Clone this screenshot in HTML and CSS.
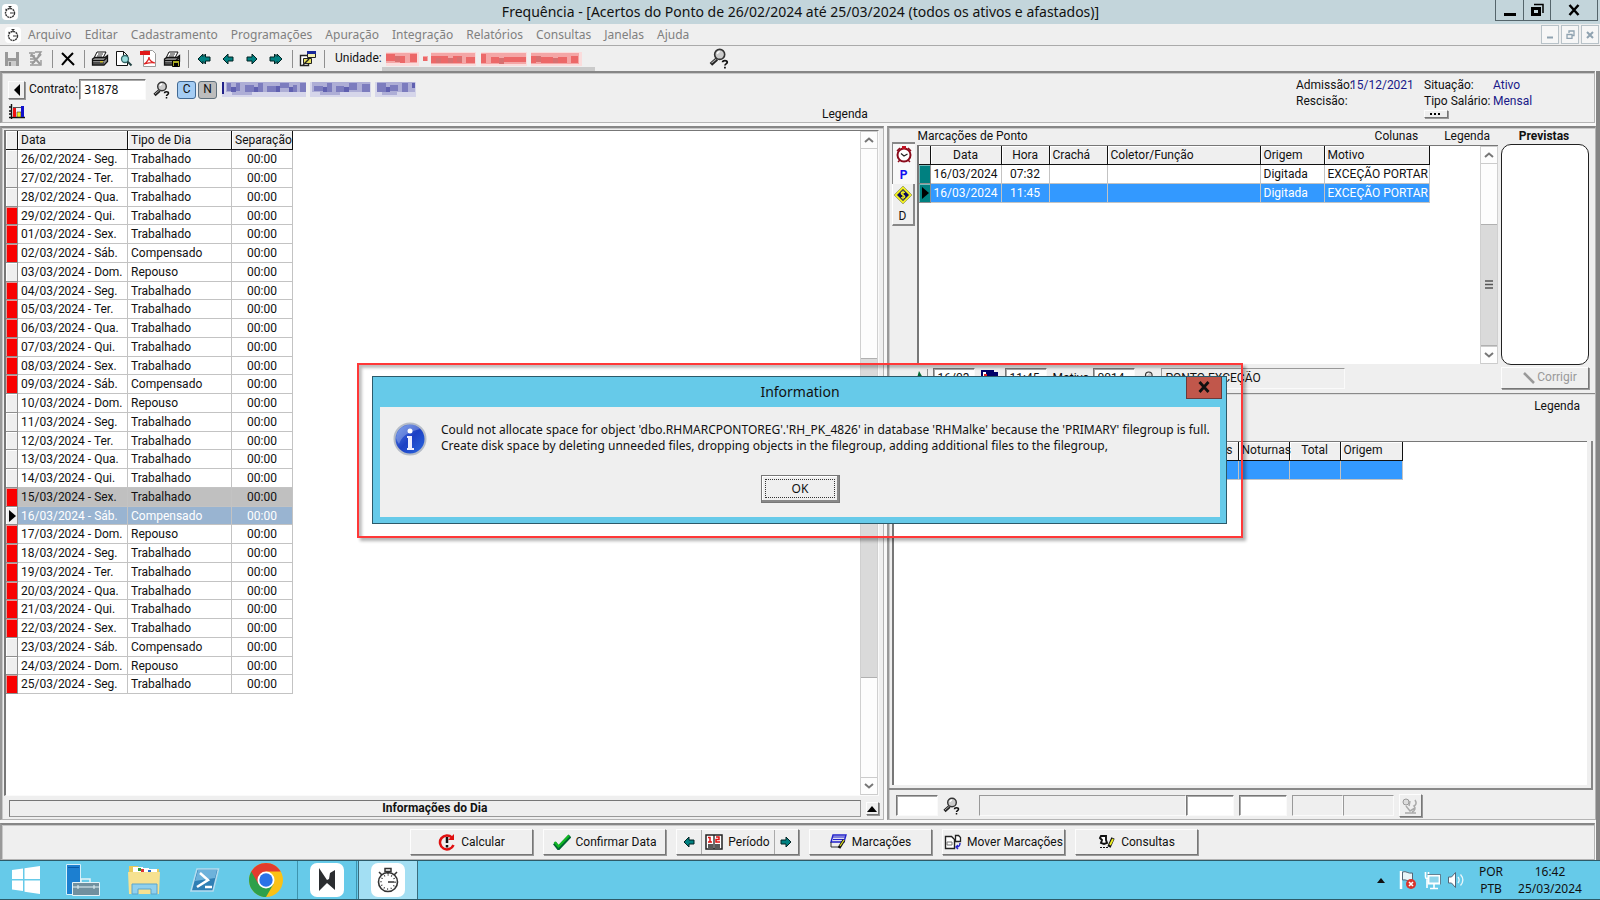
FILE: index.html
```html
<!DOCTYPE html>
<html lang="pt-BR">
<head>
<meta charset="utf-8">
<title>Frequência - Acertos do Ponto</title>
<link rel="stylesheet" href="styles.css">
</head>
<body>
<svg class="defs" aria-hidden="true">
  <symbol id="i-mag" viewBox="0 0 18 18"><path d="M7.5 9.5 2.5 14" stroke="#222" stroke-width="3.2"/><path d="M7 9.5 3 13" stroke="#aaa" stroke-width="1"/><circle cx="10" cy="5.500" r="4.300" fill="#ccc" stroke="#333" stroke-width="1.400"/><path d="M8 5a2.500 2.500 0 0 1 2-2" stroke="#fff" fill="none" stroke-width="1.300"/><path d="M12.500 12.300c0-2 4-2 4 0 0 1.300-2 1.300-2 2.700M14.500 16v1.600" stroke="#111" stroke-width="1.500" fill="none"/></symbol>
  <symbol id="i-left" viewBox="0 0 12 12"><path d="M1 6 6 1v3h5v4H6v3z" fill="#008080" stroke="#022" stroke-width="1"/></symbol>
  <symbol id="i-right" viewBox="0 0 12 12"><path d="M11 6 6 1v3H1v4h5v3z" fill="#008080" stroke="#022" stroke-width="1"/></symbol>
  <symbol id="i-left2" viewBox="0 0 14 12"><path d="M1 6 6 1v2.500L8.500 1v3H13v4H8.500v3L6 8.500V11z" fill="#008080" stroke="#022" stroke-width="1"/></symbol>
  <symbol id="i-right2" viewBox="0 0 14 12"><path d="M13 6 8 1v2.500L5.500 1v3H1v4h4.500v3L8 8.500V11z" fill="#008080" stroke="#022" stroke-width="1"/></symbol>
  <symbol id="i-print" viewBox="0 0 18 16"><path d="M6 1h9l-3 6H3z" fill="#fff" stroke="#111"/><path d="M7 3h5M6 5h5" stroke="#333"/><path d="M1.500 8 4 6.500h10l2.500-2v6L13 14H1.500z" fill="#8a8a8a" stroke="#111" stroke-width="1.300"/><path d="M2 9.500h11l3-3M2 12h11" stroke="#111" stroke-width="1.200" fill="none"/><path d="M9 10.800h3" stroke="#e0d020" stroke-width="1.200"/></symbol>
  <symbol id="i-watch" viewBox="0 0 16 16"><rect width="16" height="16" rx="4" fill="#fff"/><circle cx="8" cy="9" r="4.500" fill="none" stroke="#333" stroke-width="1.400" stroke-dasharray="2 .6"/><path d="M8 9h3.500M6.500 2.500h3M8 2.500V5M3.500 5 5 6" stroke="#333" stroke-width="1.200"/></symbol>
  <symbol id="i-up" viewBox="0 0 10 6"><path d="M1 5 5 1.500 9 5" fill="none" stroke="#777" stroke-width="2"/></symbol>
  <symbol id="i-down" viewBox="0 0 10 6"><path d="M1 1 5 4.500 9 1" fill="none" stroke="#777" stroke-width="2"/></symbol>
</svg>

<header class="titlebar">
  <svg class="s16"><use href="#i-watch"/></svg>
  <h1>Frequência - [Acertos do Ponto de 26/02/2024 até 25/03/2024 (todos os ativos e afastados)]</h1>
  <div class="winbtns">
    <button aria-label="Minimizar"><svg width="14" height="14"><path d="M1 11.500h12" stroke="#000" stroke-width="3"/></svg></button>
    <button aria-label="Restaurar"><svg width="14" height="14"><path d="M2.500 5.500h7v6h-7z" fill="none" stroke="#000" stroke-width="3"/><path d="M4 1.500h9V10" fill="none" stroke="#000" stroke-width="1.500"/></svg></button>
    <button class="wide" aria-label="Fechar"><svg width="12" height="12"><path d="m1.500 1 9 10m0-10-9 10" stroke="#000" stroke-width="2.500"/></svg></button>
  </div>
</header>

<nav class="menubar">
  <svg class="s16"><use href="#i-watch"/></svg>
  <a href="#">Arquivo</a><a href="#">Editar</a><a href="#">Cadastramento</a><a href="#">Programações</a><a href="#">Apuração</a><a href="#">Integração</a><a href="#">Relatórios</a><a href="#">Consultas</a><a href="#">Janelas</a><a href="#">Ajuda</a>
  <div class="mdibtns">
    <button aria-label="Minimizar janela"><svg width="8" height="8"><path d="M1 6.500h6" stroke="#8fa2b0" stroke-width="2"/></svg></button>
    <button aria-label="Restaurar janela"><svg width="9" height="9"><path d="M1 4.500h5v4H1zM3 3V1h5v4.500H6" fill="none" stroke="#8fa2b0" stroke-width="1.300"/></svg></button>
    <button aria-label="Fechar janela"><svg width="8" height="8"><path d="m1 1 6 6m0-6L1 7" stroke="#8fa2b0" stroke-width="2"/></svg></button>
  </div>
</nav>

<div class="toolbar">
  <button aria-label="Salvar"><svg width="16" height="16"><path d="M1 1h14v14H1z" fill="#999"/><path d="M4 1h8v6H4z" fill="#eee"/><path d="M4 10h8v5H4z" fill="#ccc"/><path d="M5 11h2v4H5z" fill="#888"/></svg></button>
  <button aria-label="Cancelar"><svg width="16" height="16"><path d="M1 2h6M2 5h5M2 8h6M2 11h5M2 14h11V9M7 1h6l-3 4" stroke="#999" fill="none" stroke-width="1.400"/><path d="m3 3 9 10m1-10L4 13" stroke="#999" stroke-width="2"/></svg></button>
  <i class="sep"></i>
  <button aria-label="Excluir"><svg width="16" height="16"><path d="m2 2 12 12M13 2C9 6 6 9 2 14" stroke="#000" stroke-width="2" fill="none"/></svg></button>
  <i class="sep"></i>
  <button aria-label="Imprimir"><svg width="18" height="16"><use href="#i-print"/></svg></button>
  <button aria-label="Visualizar"><svg width="18" height="17"><path d="M1.500 1.500h7l4 4v10h-11z" fill="#fff" stroke="#111"/><path d="M8.500 1.500v4h4" fill="none" stroke="#111"/><circle cx="10" cy="9" r="3.500" fill="#9dd" stroke="#366" stroke-width="1.300"/><path d="m12.500 11.500 4 4" stroke="#244" stroke-width="2"/></svg></button>
  <button aria-label="PDF"><svg width="17" height="17"><path d="M3.500.5h9l3 3v13h-12z" fill="#fff" stroke="#999"/><path d="M0 1h10v4H0z" fill="#e01818"/><path d="M4 14c4-2 5-6 5-7 0 3 2 5 6 6-4-1-7 0-11 1z" fill="none" stroke="#d22" stroke-width="1.200"/></svg></button>
  <button aria-label="Imprimir e salvar"><svg width="18" height="16"><use href="#i-print"/><path d="M9.500 9.500h7v6h-7z" fill="#aa2" stroke="#000"/><path d="M11 12h4v3h-4z" fill="#000"/></svg></button>
  <i class="sep"></i>
  <button aria-label="Primeiro"><svg width="14" height="12"><use href="#i-left2"/></svg></button>
  <button aria-label="Anterior"><svg width="12" height="12"><use href="#i-left"/></svg></button>
  <button aria-label="Próximo"><svg width="12" height="12"><use href="#i-right"/></svg></button>
  <button aria-label="Último"><svg width="14" height="12"><use href="#i-right2"/></svg></button>
  <i class="sep"></i>
  <button aria-label="Janelas"><svg width="18" height="17"><path d="M1.500 5.500h8v10h-8z" fill="#fff" stroke="#222" stroke-width="1.400"/><path d="M4.500 8.500h8v5h-8z" fill="#e8e060" stroke="#222"/><path d="M8.500 1.500h8v6h-8z" fill="#f4f0b0" stroke="#222"/><path d="M8 1h9v3H8z" fill="#1a2a9a"/><path d="m4 15 6-6" stroke="#222" stroke-width="1.500"/></svg></button>
  <i class="sep"></i>
  <span class="unit-label">Unidade:</span>
  <span class="unit-value"><svg class="mosaic" width="196" height="14" viewBox="0 0 196 14"><path d="M0 0h33v14H0zM45 0h45v14H45zM95 0h46v14H95zM145 0h51v14h-51z" fill="#fadcdc"/><path d="M0 1h31v10H0zM37 4h5v5h-5zM45 1h44v11H45zM95 1h45v11H95zM145 1h48v11h-48z" fill="#f4a6a6"/><path d="M0 2h9v7H0zM14 4h5v7h-5zM24 2h7v8h-7zM37 5h4v4h-4zM45 4h17v7H45zM67 4h9v7h-9zM80 5h9v6h-9zM95 2h5v9h-5zM105 5h8v6h-8zM118 5h22v5h-22zM145 4h5v7h-5zM155 5h12v6h-12zM172 5h9v6h-9zM185 4h7v7h-7z" fill="#ec6868"/><path d="M9 4h5v6H9zM50 6h5v5h-5zM62 6h5v5h-5zM71 5h5v5h-5zM113 6h5v6h-5zM150 4h5v6h-5zM167 6h5v5h-5z" fill="#d87070"/></svg></span>
  <button class="find" aria-label="Pesquisar unidade"><svg width="21" height="21"><use href="#i-mag"/></svg></button>
</div>

<main class="workspace">
  <section class="panel contract">
    <div class="who">
      <div class="line">
        <button class="raised back" aria-label="Voltar"><svg width="8" height="12"><path d="M7 0v12L1 6z"/></svg></button>
        <label for="ct">Contrato:</label>
        <input id="ct" class="field ct" value="31878">
        <button class="plain" aria-label="Pesquisar"><svg width="18" height="18"><use href="#i-mag"/></svg></button>
        <button class="tag on">C</button><button class="tag">N</button>
        <svg class="mosaic" width="194" height="15" viewBox="0 0 194 15"><path d="M0 0h84v15H0zM88 0h61v15H88zM153 0h41v15h-41z" fill="#d6d6ea"/><path d="M4 0h80v10H4zM90 0h58v10H90zM155 0h38v10h-38zM10 10h20v3H10zM98 10h20v3H98zM160 10h15v3h-15z" fill="#aeaed6"/><path d="M5 1h4v8H5zM14 1h4v8h-4zM23 3h9v7h-9zM36 1h5v9h-5zM45 4h9v6h-9zM58 1h9v5h-9zM71 3h4v7h-4zM78 1h6v9h-6zM92 4h9v5h-9zM105 1h5v9h-5zM114 4h8v6h-8zM127 1h8v7h-8zM140 2h8v8h-8zM155 1h9v9h-9zM168 3h8v6h-8zM180 1h6v9h-6z" fill="#7c7cbe"/><path d="M9 5h5v5H9zM32 5h4v5h-4zM54 4h4v6h-4zM67 5h4v5h-4zM101 5h4v5h-4zM122 5h5v5h-5zM164 5h4v5h-4zM190 1h3v5h-3z" fill="#6060b0"/><path d="M0 0h2v12H0z" fill="#22228a"/></svg>
      </div>
      <button class="plain chart" aria-label="Gráfico"><svg width="16" height="16"><path d="M2.500 0v15M0 13.500h16M0 3h2M0 7h2M0 10h2" stroke="#111" stroke-width="1.400"/><path d="M4 4h3v9H4z" fill="#e11"/><path d="M8 8h4v5H8z" fill="#ee2" stroke="#333" stroke-width=".6"/><path d="M4 3.500h11" stroke="#555"/><path d="M12 2h3v11h-3z" fill="#11c"/></svg></button>
    </div>
    <span class="legend">Legenda</span>
    <dl class="facts">
      <dt>Admissão:</dt><dd>15/12/2021</dd><dt>Situação:</dt><dd>Ativo</dd>
      <dt>Rescisão:</dt><dd></dd><dt>Tipo Salário:</dt><dd>Mensal</dd>
      <dd class="more"><button class="raised" aria-label="Mais"><svg width="12" height="3"><path d="M0 0h2v2H0zM4 0h2v2H4zM8 0h2v2H8z"/></svg></button></dd>
    </dl>
  </section>

  <div class="split">
    <section class="panel days">
      <div class="sunken grow">
        <div class="gridarea">
          <table class="grid daytable">
            <colgroup><col class="c12"><col class="c110"><col class="c104"><col class="c61"></colgroup>
            <thead><tr><th></th><th>Data</th><th>Tipo de Dia</th><th>Separação</th></tr></thead>
            <tbody>
              <tr><td class="mk"></td><td>26/02/2024 - Seg.</td><td>Trabalhado</td><td>00:00</td></tr>
              <tr><td class="mk"></td><td>27/02/2024 - Ter.</td><td>Trabalhado</td><td>00:00</td></tr>
              <tr><td class="mk"></td><td>28/02/2024 - Qua.</td><td>Trabalhado</td><td>00:00</td></tr>
              <tr><td class="mk red"></td><td>29/02/2024 - Qui.</td><td>Trabalhado</td><td>00:00</td></tr>
              <tr><td class="mk red"></td><td>01/03/2024 - Sex.</td><td>Trabalhado</td><td>00:00</td></tr>
              <tr><td class="mk red"></td><td>02/03/2024 - Sáb.</td><td>Compensado</td><td>00:00</td></tr>
              <tr><td class="mk"></td><td>03/03/2024 - Dom.</td><td>Repouso</td><td>00:00</td></tr>
              <tr><td class="mk red"></td><td>04/03/2024 - Seg.</td><td>Trabalhado</td><td>00:00</td></tr>
              <tr><td class="mk red"></td><td>05/03/2024 - Ter.</td><td>Trabalhado</td><td>00:00</td></tr>
              <tr><td class="mk red"></td><td>06/03/2024 - Qua.</td><td>Trabalhado</td><td>00:00</td></tr>
              <tr><td class="mk red"></td><td>07/03/2024 - Qui.</td><td>Trabalhado</td><td>00:00</td></tr>
              <tr><td class="mk red"></td><td>08/03/2024 - Sex.</td><td>Trabalhado</td><td>00:00</td></tr>
              <tr><td class="mk red"></td><td>09/03/2024 - Sáb.</td><td>Compensado</td><td>00:00</td></tr>
              <tr><td class="mk"></td><td>10/03/2024 - Dom.</td><td>Repouso</td><td>00:00</td></tr>
              <tr><td class="mk"></td><td>11/03/2024 - Seg.</td><td>Trabalhado</td><td>00:00</td></tr>
              <tr><td class="mk"></td><td>12/03/2024 - Ter.</td><td>Trabalhado</td><td>00:00</td></tr>
              <tr><td class="mk"></td><td>13/03/2024 - Qua.</td><td>Trabalhado</td><td>00:00</td></tr>
              <tr><td class="mk"></td><td>14/03/2024 - Qui.</td><td>Trabalhado</td><td>00:00</td></tr>
              <tr class="marked"><td class="mk red"></td><td>15/03/2024 - Sex.</td><td>Trabalhado</td><td>00:00</td></tr>
              <tr class="current"><td class="mk"><svg width="7" height="12"><path d="M0 0v12l7-6z"/></svg></td><td>16/03/2024 - Sáb.</td><td>Compensado</td><td>00:00</td></tr>
              <tr><td class="mk red"></td><td>17/03/2024 - Dom.</td><td>Repouso</td><td>00:00</td></tr>
              <tr><td class="mk red"></td><td>18/03/2024 - Seg.</td><td>Trabalhado</td><td>00:00</td></tr>
              <tr><td class="mk red"></td><td>19/03/2024 - Ter.</td><td>Trabalhado</td><td>00:00</td></tr>
              <tr><td class="mk red"></td><td>20/03/2024 - Qua.</td><td>Trabalhado</td><td>00:00</td></tr>
              <tr><td class="mk red"></td><td>21/03/2024 - Qui.</td><td>Trabalhado</td><td>00:00</td></tr>
              <tr><td class="mk red"></td><td>22/03/2024 - Sex.</td><td>Trabalhado</td><td>00:00</td></tr>
              <tr><td class="mk"></td><td>23/03/2024 - Sáb.</td><td>Compensado</td><td>00:00</td></tr>
              <tr><td class="mk"></td><td>24/03/2024 - Dom.</td><td>Repouso</td><td>00:00</td></tr>
              <tr><td class="mk red"></td><td>25/03/2024 - Seg.</td><td>Trabalhado</td><td>00:00</td></tr>
            </tbody>
          </table>
        </div>
        <div class="scroll"><span class="arrow"><svg width="10" height="6"><use href="#i-up"/></svg></span><div class="track days-track"><div class="thumb"></div></div><span class="arrow"><svg width="10" height="6"><use href="#i-down"/></svg></span></div>
      </div>
      <div class="dayinfo">
        <strong>Informações do Dia</strong>
        <button class="raised" aria-label="Expandir"><svg width="10" height="6"><path d="M0 6h10L5 0z"/></svg></button>
      </div>
    </section>

    <section class="panel right">
      <div class="punches">
        <div class="side">
          <button class="flat top" aria-label="Relógio"><svg width="18" height="18"><circle cx="9" cy="10" r="6.500" fill="#fff" stroke="#8a0a1a" stroke-width="2"/><path d="M7 2.500h4" stroke="#c01020" stroke-width="3"/><path d="m2 6 3-3M16 6l-3-3M3 17l2-2M15 17l-2-2" stroke="#8a0a1a" stroke-width="1.500"/><path d="M6 8.500 9 11l3.500-2" fill="none" stroke="#222" stroke-width="1.200"/></svg></button>
          <button class="flat p">P</button>
          <button class="hi" aria-label="Valores"><svg width="20" height="20"><path d="m10 1 9 9-9 9-9-9z" fill="#ee2" stroke="#996" stroke-width=".8"/><path d="m10 4 6 6-6 6-6-6z" fill="#0a0a5a"/><path d="M12 7.500c-4-2-5 1.500-2 2.500s2 4-2 2.500M10 5.500v9" fill="none" stroke="#ee2" stroke-width="1.300"/></svg></button>
          <button class="hi bottom">D</button>
        </div>
        <div class="pmain">
          <div class="caption"><span>Marcações de Ponto</span><span class="cap-r">Colunas</span><span>Legenda</span></div>
          <div class="whitebox">
            <div class="gridarea">
              <table class="grid punchtable">
                <colgroup><col class="c12"><col class="c71"><col class="c48"><col class="c58"><col class="c153"><col class="c64"><col class="c105"></colgroup>
                <thead><tr><th></th><th class="ctr">Data</th><th class="ctr">Hora</th><th>Crachá</th><th>Coletor/Função</th><th>Origem</th><th>Motivo</th></tr></thead>
                <tbody>
                  <tr><td class="mk teal"></td><td class="ctr">16/03/2024</td><td class="ctr">07:32</td><td></td><td></td><td>Digitada</td><td>EXCEÇÃO PORTAR</td></tr>
                  <tr class="sel"><td class="mk teal"><svg width="7" height="12"><path d="M0 0v12l7-6z"/></svg></td><td class="ctr">16/03/2024</td><td class="ctr">11:45</td><td></td><td></td><td>Digitada</td><td>EXCEÇÃO PORTAR</td></tr>
                </tbody>
              </table>
            </div>
            <div class="scroll"><span class="arrow"><svg width="10" height="6"><use href="#i-up"/></svg></span><div class="track punch-track"><div class="thumb"><svg width="8" height="9"><path d="M0 1h8M0 4.500h8M0 8h8" stroke="#555" stroke-width="1.600"/></svg></div></div><span class="arrow"><svg width="10" height="6"><use href="#i-down"/></svg></span></div>
          </div>
          <div class="editrow">
            <svg width="6" height="16"><path d="m2 1 4 7H0z" fill="#063"/></svg><i class="sep"></i>
            <input class="field w42" aria-label="Data" value="16/03">
            <svg width="18" height="16"><path d="M1 1h11v12H1z" fill="#fff" stroke="#006" stroke-width="2"/><path d="M5 2h12v5H5z" fill="#006"/><path d="M3 4h3v3H3z" fill="#d22"/></svg>
            <input class="field w42" aria-label="Hora" value="11:45">
            <label for="mot">Motivo</label>
            <input class="field w42" id="mot" value="0014">
            <svg width="14" height="18"><use href="#i-mag"/></svg>
            <input class="field ro wide" aria-label="Descrição do motivo" value="PONTO EXCEÇÃO" readonly>
          </div>
        </div>
        <aside class="planned">
          <h2>Previstas</h2>
          <div class="plannedbox"></div>
          <button class="raised fix"><svg width="14" height="12"><path d="m3 1 10 10" stroke="#999" stroke-width="2.500"/></svg>Corrigir</button>
        </aside>
      </div>
      <div class="hours">
        <div class="hours-cap">Legenda</div>
        <div class="frame">
          <div class="whitebox">
            <table class="grid hourtable">
              <colgroup><col class="c12"><col><col class="c51"><col class="c51"><col class="c51"><col class="c62"></colgroup>
              <thead><tr><th></th><th></th><th class="end">Diurnas</th><th>Noturnas</th><th class="ctr">Total</th><th>Origem</th></tr></thead>
              <tbody><tr class="sel"><td class="mk"></td><td></td><td></td><td></td><td></td><td></td></tr></tbody>
            </table>
          </div>
        </div>
        <div class="entry">
          <input class="field w42" aria-label="Código">
          <button class="plain" aria-label="Pesquisar código"><svg width="18" height="18"><use href="#i-mag"/></svg></button>
          <input class="field ro desc" aria-label="Descrição" readonly>
          <input class="field w48" aria-label="Início"><input class="field w48 gap" aria-label="Fim">
          <input class="field ro w50 gap" aria-label="Horas" readonly><input class="field ro w50" aria-label="Saldo" readonly>
          <button class="raised sq" aria-label="Apagar"><svg width="18" height="18"><circle cx="5" cy="5" r="3" fill="#ddd" stroke="#999"/><path d="M14 3c2 3 1 5-1 6 2 2 1 5-2 6M4 16h11M5 9l4 5 5-3M9 4l-1 5" fill="none" stroke="#aaa" stroke-width="1.500"/></svg></button>
        </div>
      </div>
    </section>
  </div>

  <section class="panel actions">
    <button class="raised act"><svg width="18" height="18"><path d="M14 4.500A7 7 0 1 0 15.500 12" fill="none" stroke="#e01010" stroke-width="2.500"/><path d="M16 1v6h-6z" fill="#e01010"/><path d="M9 4v6M9 12v2.500" stroke="#111" stroke-width="2.500"/></svg>Calcular</button>
    <button class="raised act"><svg width="18" height="16"><path d="m1.500 9 4 5L17 2" fill="none" stroke="#063" stroke-width="4"/><path d="m1.500 8 4 4.500L16 1.500" fill="none" stroke="#1b2" stroke-width="2"/></svg>Confirmar Data</button>
    <div class="raised period">
      <button aria-label="Período anterior"><svg width="12" height="12"><use href="#i-left"/></svg></button>
      <button class="mid"><svg width="18" height="16"><path d="M1 1h16v14H1z" fill="#fff" stroke="#222" stroke-width="1.500"/><path d="M9 1v14M3 11h5M3 13h5M10 11h5M10 13h5" stroke="#222" stroke-width="1.300"/><path d="M3 3.500h2V8M3 8h4M11 3h3v2.500h-3V8h4" fill="none" stroke="#e01010" stroke-width="1.500"/></svg>Período</button>
      <button aria-label="Próximo período"><svg width="12" height="12"><use href="#i-right"/></svg></button>
    </div>
    <button class="raised act"><svg width="17" height="16"><path d="M3 1h13l-2 7H1z" fill="#dde" stroke="#22c" stroke-width="1.400"/><path d="M3 3h12M3 5.500h11" stroke="#22c" stroke-width="1.200"/><path d="M1 8v5h9" fill="none" stroke="#333"/><path d="m9 14 5-8" stroke="#111" stroke-width="3"/><path d="m10 12 4-6" stroke="#dd2" stroke-width="1.300"/></svg>Marcações</button>
    <button class="raised act"><svg width="18" height="16"><path d="M1.500 2.500h6l3 3v9h-9z" fill="#fff" stroke="#222" stroke-width="1.400"/><path d="M3 8h5v3H3z" fill="none" stroke="#777"/><path d="M11.500 1.500h3l2 2v4h-5z" fill="#fff" stroke="#222" stroke-width="1.300"/><path d="M16 9c0 4-2 4-4 4m2-2-2 2 2 2" fill="none" stroke="#22c" stroke-width="1.400"/></svg>Mover Marcações</button>
    <button class="raised act"><svg width="18" height="16"><path d="M3 2h5v4l1 3-3 1-3-1 1-3-2-2z" fill="#fff" stroke="#111" stroke-width="1.900"/><path d="m11 13 4-9" stroke="#111" stroke-width="3.500"/><path d="m12 11 3-6" stroke="#ee2" stroke-width="1.800"/><path d="M2 13.500h8" stroke="#111" stroke-dasharray="2 1"/></svg>Consultas</button>
  </section>
</main>

<footer class="taskbar">
  <button class="start" aria-label="Iniciar"><svg width="28" height="28"><path d="m0 4 11-1.500V13H0zM12.500 2.300 28 0v13H12.500zM0 14.500h11V25L0 23.500zM12.500 14.500H28V28l-15.500-2.300z" fill="#fff"/></svg></button>
  <button aria-label="Gerenciador de Servidores"><svg width="34" height="32"><path d="M.5.5h14v30H.5z" fill="#1c7fd0" stroke="#d5f0fa"/><path d="M2 3.500h11" stroke="#0a5aa5"/><path d="M6.500 18.500h27v13h-27z" fill="#71909f" stroke="#e4f3f8"/><path d="M15 18v-3h9v3" fill="none" stroke="#e4f3f8" stroke-width="1.500"/><path d="M7 23h26M12 21v4M28 21v4" stroke="#e4f3f8"/></svg></button>
  <button aria-label="Explorador de Arquivos"><svg width="34" height="32"><path d="M2 2h9l2 3h19v25H2z" fill="#e8c95a"/><path d="M6 3h10v6H6zM14 4h8v5h-8zM22 5h8v5h-8z" fill="#fff"/><path d="M11 4h3v3h-3z" fill="#2a9a3a"/><path d="M14 5h3v3h-3z" fill="#d33"/><path d="M21 6h3v3h-3z" fill="#26c"/><path d="M1 8h32l-1 22H2z" fill="#f6e190"/><path d="M5 30V20h25v10h-6v-5H11v5z" fill="#8fd0ee" stroke="#5aa5cc"/></svg></button>
  <button aria-label="PowerShell"><svg width="30" height="24"><path d="M7 1h21.500L23 23H1z" fill="#2f7fb5" stroke="#b5dcee" stroke-width="1.500"/><path d="M8 2h19l-2 8-20 3z" fill="#6db2db"/><path d="m10 5 8 7-11 7M15 19h7" fill="none" stroke="#fff" stroke-width="2.500"/></svg></button>
  <button aria-label="Chrome"><svg width="34" height="34" viewBox="-17 -17 34 34"><circle r="17" fill="#fbc116"/><path d="M0 0-14.700-8.500A17 17 0 0 0 0 17L7.400 4.200z" fill="#2da04a"/><path d="M0-8.500h14.700A17 17 0 0 0-14.700-8.500L-7.400 4.200z" fill="#e33b2e"/><circle r="8.500" fill="#fff"/><circle r="6.700" fill="#2a73e8"/></svg></button>
  <button class="open" aria-label="RH"><svg width="34" height="34"><rect width="34" height="34" rx="7" fill="#fff"/><path d="M9 5v23l8-8 8 7V7l-5 3-1 6-2 1zM21 17l4 3v-6z" fill="#2b2d30"/></svg></button>
  <button class="open active" aria-label="Frequência"><svg width="34" height="34"><rect width="34" height="34" rx="7" fill="#fff"/><circle cx="17" cy="19" r="9.500" fill="none" stroke="#333" stroke-width="1.600"/><circle cx="17" cy="19" r="7" fill="none" stroke="#333" stroke-width="1.500" stroke-dasharray="1 2.600"/><path d="M17 19h6M14 5.500h6v3h-6zM17 8v3M8 9l3 3M26 9l-3 3" fill="none" stroke="#333" stroke-width="1.500"/></svg></button>
  <div class="tray">
    <svg width="8" height="5"><path d="M0 5h8L4 0z" fill="#111"/></svg>
    <svg width="18" height="20"><path d="M2 1v18" stroke="#fff" stroke-width="2.500"/><path d="M3.500 2c4-1.500 5 2 10 1v8c-5 1-6-2-10-1z" fill="#e8f4f8" stroke="#567"/><circle cx="12" cy="14" r="5" fill="#d8342c"/><path d="m10 12 4 4m0-4-4 4" stroke="#fff" stroke-width="1.600"/></svg>
    <svg width="18" height="19"><path d="M5.500 4.500h11v8h-11z" fill="#8ed4ea" stroke="#fff" stroke-width="1.800"/><path d="M11 13v4M7 17.500h8M2.500 1v5c0 2 3 2 3 0V1M4 7v10" fill="none" stroke="#fff" stroke-width="1.600"/><path d="M4.500 3.500h13v10" fill="none" stroke="#456" stroke-width=".7"/></svg>
    <svg width="18" height="18"><path d="M1.500 6h3l4-4.500v15l-4-4.500h-3z" fill="#fff" stroke="#567"/><path d="M11 6c1.500 2 1.500 4 0 6M13.500 3.500c3 3.500 3 7.500 0 11" fill="none" stroke="#e8f6fa" stroke-width="1.300"/></svg>
    <div class="two lang"><span>POR</span><span>PTB</span></div>
    <div class="two clock"><span>16:42</span><span>25/03/2024</span></div>
  </div>
</footer>

<div class="overlay">
  <div class="callout">
    <div class="dialog" role="dialog" aria-labelledby="dt">
      <div class="dtitle"><h2 id="dt">Information</h2><button aria-label="Fechar diálogo"><svg width="12" height="12"><path d="m1.500 1 9 10m0-10-9 10" stroke="#111" stroke-width="2.800"/></svg></button></div>
      <div class="dbody">
        <div class="msg">
          <svg width="34" height="34"><defs><linearGradient id="ib" x1="0" y1="0" x2="1" y2="1"><stop offset="0" stop-color="#5a8ae8"/><stop offset=".5" stop-color="#1c3fc4"/><stop offset="1" stop-color="#2a6ae0"/></linearGradient></defs><circle cx="17" cy="17" r="15.500" fill="url(#ib)" stroke="#b5bcc8" stroke-width="2"/><path d="M3 16a14 14 0 0 1 24-9C20 9 10 11 6 22a14 14 0 0 1-3-6z" fill="#fff" opacity=".25"/><circle cx="17" cy="9" r="2.500" fill="#fff"/><path d="M14 14h5v12h2v2h-7v-2h1V16h-1z" fill="#eef"/></svg>
          <p>Could not allocate space for object 'dbo.RHMARCPONTOREG'.'RH_PK_4826' in database 'RHMalke' because the 'PRIMARY' filegroup is full.<br>Create disk space by deleting unneeded files, dropping objects in the filegroup, adding additional files to the filegroup,</p>
        </div>
        <button class="ok"><span>OK</span></button>
      </div>
    </div>
  </div>
</div>
</body>
</html>
```
FILE: styles.css
```css
* { box-sizing: border-box; }
:root {
  --face: #efefef;
  --dark: #868686;
  --mid: #b4b4b4;
  --ui: Roboto, "Liberation Sans", sans-serif;
  --seg: "Noto Sans", "Open Sans", sans-serif;
}
body {
  margin: 0;
  min-height: 100vh;
  display: flex;
  flex-direction: column;
  background: var(--face);
  font: 12px/15px var(--ui);
  color: #111;
  position: relative;
}
button, input { font: inherit; color: inherit; margin: 0; padding: 0; }
button { background: none; border: 0; display: flex; align-items: center; justify-content: center; }
h1, h2, p, dl, dd { margin: 0; font-weight: normal; }
svg { display: block; flex: none; }
a { color: inherit; text-decoration: none; }
.defs { position: absolute; width: 0; height: 0; }
.s16 { width: 16px; height: 16px; }

.titlebar { height: 24px; display: flex; align-items: center; background: #c3d5db; padding: 0 2px; }
.titlebar h1 { flex: 1; text-align: center; font: 14px/26px var(--seg); padding-left: 88px; white-space: nowrap; }
.winbtns { display: flex; align-self: flex-start; border: 1px solid #55656b; border-top: 0; height: 21px; }
.winbtns button { width: 27px; }
.winbtns button + button { border-left: 1px solid #55656b; }
.winbtns .wide { width: 47px; }

.menubar { height: 22px; display: flex; align-items: center; gap: 13px; padding-left: 5px; font: 12px/20px var(--seg); color: #808080; border-bottom: 1px solid #aaa; }
.menubar .s16 { margin-right: -6px; }
.mdibtns { margin-left: auto; display: flex; gap: 2px; padding-right: 1px; }
.mdibtns button { width: 18px; height: 19px; border: 1px solid #b8c2c8; background: #f6f6f6; }

.toolbar { height: 25px; display: flex; align-items: center; }
.toolbar button { width: 24px; height: 24px; }
.sep { width: 8px; height: 18px; display: flex; justify-content: center; }
.sep::before { content: ""; width: 1px; background: #8f8f8f; }
.unit-label { padding-left: 7px; }
.unit-value { align-self: stretch; display: flex; flex-direction: column; justify-content: flex-end; width: 213px; padding-left: 4px; border-bottom: 4px solid #cacaca; }
.unit-value .mosaic { margin-bottom: 1px; }
.toolbar .find { margin-left: 112px; }

.workspace { flex: 1; display: flex; flex-direction: column; gap: 3px; border-right: 4px solid #858585; background: #f8f8f8; }
.panel { background: var(--face); border: 1px solid var(--mid); border-top: 2px solid var(--dark); border-left: 2px solid #999; box-shadow: inset 0 1px #c8c8c8, inset 1px 0 #c8c8c8; margin-right: 1px; }
.raised { background: var(--face); border: 1px solid; border-color: #fdfdfd #777 #777 #fdfdfd; box-shadow: 1px 1px #999; }
.field { height: 21px; border: 1px solid; border-color: #777 #fafafa #fafafa #777; box-shadow: inset 1px 1px #aaa; border-radius: 0; background: #fff; padding-left: 4px; min-width: 0; font: 12px/15px var(--ui); }
.field.ro { background: var(--face); box-shadow: none; border-color: #999 #fafafa #fafafa #999; }

.contract { height: 52px; display: flex; margin-right: 1px; }
.who { flex: 0 0 820px; padding: 6px 0 0 6px; }
.line { display: flex; align-items: center; }
.back { width: 17px; height: 18px; }
.line label { padding: 0 1px 0 4px; }
.ct { width: 67px; font: 12px/15px var(--seg); }
.plain { width: 18px; height: 18px; }
.line .plain { margin: 0 7px 0 6px; }
.tag { width: 19px; height: 18px; border: 1px solid #60707c; border-radius: 3px; background: #bdbdbd; margin-right: 2px; }
.tag.on { background: #a5cdf4; border-color: #426a94; }
.line .mosaic { margin-left: 3px; }
.chart { margin-top: 3px; }
.legend { flex: 1; align-self: flex-end; }
.facts { display: grid; grid-template-columns: 54px 74px 69px 101px; grid-template-rows: 17px 15px 10px; align-items: center; padding-top: 4px; }
.facts dd { color: #191988; white-space: nowrap; }
.facts dt { white-space: nowrap; }
.facts .more { grid-column: 3; color: #111; }
.more button { width: 24px; height: 8px; }

.split { flex: 1; display: grid; grid-template-columns: 883fr 709fr; gap: 3px; min-height: 0; }
.days { margin: 0; padding: 2px 4px 1px 2px; display: flex; flex-direction: column; }
.sunken { display: flex; border: 2px solid; border-width: 1px 1px 1px 2px; border-color: #777 #fafafa #fafafa #777; background: #fff; }
.grow { flex: 1; }
.gridarea { flex: 1; min-width: 0; }
.grid { table-layout: fixed; border-collapse: separate; border-spacing: 0; }
.grid th { height: 19px; padding: 0 0 0 3px; text-align: left; font-weight: normal; background: var(--face); border: solid #111; border-width: 0 1px 1px 0; box-shadow: inset 1px 1px #fff; white-space: nowrap; }
.grid td { height: 19px; padding: 0 0 0 3px; border: solid #c3c3c3; border-width: 0 1px 1px 0; white-space: nowrap; overflow: hidden; line-height: 14px; }
.grid th.ctr, .grid td.ctr { text-align: center; padding: 0; }
.grid th.end { text-align: right; padding-right: 5px; }
.grid .mk { padding: 0 0 0 3px; background: var(--face); border-color: #8f8f8f; box-shadow: inset 1px 1px #fff; }
.grid .mk.red { background: #f90000; box-shadow: inset 1px 1px #d99; }
.grid .mk.teal { background: #008080; box-shadow: inset 1px 1px #7bb; }
.daytable { width: 287px; }
.daytable tr:nth-child(4n) td { height: 18px; }
.daytable td:last-child { text-align: center; padding: 0; }
.marked td { background: #c0c0c0; }
.current td { background: #99b4d1; color: #fff; }
.sel td { background: #3399ff; color: #fff; }
.c12 { width: 12px; } .c110 { width: 110px; } .c104 { width: 104px; } .c61 { width: 61px; }
.c71 { width: 71px; } .c48 { width: 48px; } .c58 { width: 58px; } .c153 { width: 153px; }
.c64 { width: 64px; } .c105 { width: 105px; } .c51 { width: 51px; } .c62 { width: 62px; }
.punchtable { width: 511px; }
.hourtable { width: 509px; align-self: flex-start; }

.scroll { width: 18px; display: flex; flex-direction: column; border: 1px solid #d0d0d0; border-width: 0 1px; background: #fdfdfd; }
.arrow { height: 18px; display: flex; align-items: center; justify-content: center; border: solid #ccc; border-width: 1px 0; }
.track { flex: 1; display: grid; }
.thumb { grid-row: 2; background: #dadada; border: solid #b0b0b0; border-width: 1px 0; display: flex; align-items: center; justify-content: center; }
.days-track { grid-template-rows: 209fr 320fr 99fr; }
.punch-track { grid-template-rows: 60fr 121fr 0fr; }

.dayinfo { display: flex; align-items: center; gap: 5px; padding: 4px 0 1px 5px; }
.dayinfo strong { flex: 1; height: 17px; border: 1px solid; border-color: #777 #999 #999 #777; text-align: center; line-height: 15px; font-size: 12px; }
.dayinfo button { width: 13px; height: 13px; }

.right { margin: 0; display: grid; grid-template-rows: 267fr 425fr; min-width: 0; }
.punches { display: flex; border-bottom: 2px groove #ddd; padding: 0 6px 4px 3px; min-height: 0; }
.side { width: 23px; padding-top: 14px; }
.side button { width: 23px; height: 21px; }
.side .flat { background: #f8f8f8; border-left: 1px solid #888; }
.side .top { border-top: 2px solid #888; }
.side .p { color: #1010f0; font-weight: bold; padding-top: 4px; }
.side .hi { border-right: 2px solid #888; border-left: 1px solid #fff; }
.side .bottom { border-bottom: 2px solid #888; padding-top: 4px; }
.pmain { flex: 1; display: flex; flex-direction: column; margin-left: 2px; min-width: 0; }
.caption { height: 17px; display: flex; gap: 26px; padding: 0 8px 0 1px; align-items: center; }
.cap-r { margin-left: auto; }
.whitebox { flex: 1; display: flex; background: #fff; border: solid #777; border-width: 1px 0 0 2px; min-height: 0; }
.editrow { display: flex; align-items: center; height: 25px; padding-top: 4px; gap: 6px; }
.editrow .sep { width: 2px; margin: 0 -2px; }
.w42 { width: 42px; } .w48 { width: 48px; } .w50 { width: 51px; }
.editrow .wide { width: 184px; }
.editrow label { width: 34px; }
.planned { width: 88px; margin-left: 3px; display: flex; flex-direction: column; }
.planned h2 { font: bold 12px/16px var(--ui); text-align: center; padding-right: 2px; }
.plannedbox { flex: 1; border: 1px solid #222; border-radius: 10px; background: #fff; margin-bottom: 2px; }
.fix { height: 22px; color: #999; gap: 2px; padding-left: 8px; }

.hours { display: flex; flex-direction: column; min-height: 0; padding-right: 2px; }
.hours-cap { height: 46px; text-align: right; padding: 4px 13px 0 0; }
.frame { flex: 1; display: flex; border-right: 2px solid #888; border-bottom: 2px solid #888; padding: 0 4px 3px 3px; }
.entry { display: flex; align-items: center; padding: 4px 0 2px 7px; }
.entry .plain { margin: 0 19px 0 4px; }
.entry .desc { width: 207px; }
.entry .gap { margin-left: 5px; }
.sq { width: 23px; height: 23px; margin-left: 5px; }

.actions { height: 37px; display: flex; align-items: center; justify-content: center; gap: 10px; padding-left: 12px; }
.act { width: 123px; height: 26px; gap: 5px; white-space: nowrap; }
.period { width: 123px; height: 26px; display: flex; }
.period button { flex: 1; }
.period .mid { flex: 0 0 74px; gap: 5px; border: solid #aaa; border-width: 0 1px; }

.taskbar { height: 40px; display: flex; gap: 1px; background: #66cae9; border-top: 1px solid #2d5a68; border-bottom: 1px solid #2d5a68; }
.taskbar > button { width: 60px; }
.taskbar > .start { width: 52px; }
.open { border: solid #3e93ad; border-width: 0 1px; }
.active { background: #a3dff3; border-color: #3a6c7c; }
.tray { margin-left: auto; display: flex; align-items: center; gap: 6px; padding-right: 17px; font: 12px/17px var(--seg); }
.tray > svg:first-child { margin-right: 8px; }
.two { display: flex; flex-direction: column; align-items: center; }
.lang { width: 40px; }
.clock { width: 66px; }

.overlay { position: absolute; inset: 0; display: flex; align-items: center; justify-content: center; }
.callout { border: 2px solid #ff3838; padding: 11px 14px 12px 13px; box-shadow: 3px 3px 3px rgba(0,0,0,.3), inset 3px 3px 3px rgba(0,0,0,.25); }
.dialog { width: 855px; background: #66cae9; border: 1px solid #2c5a6a; padding: 0 6px 6px 7px; }
.dtitle { height: 30px; display: grid; grid-template-columns: 36px 1fr 36px; }
.dtitle h2 { grid-column: 2; text-align: center; font: 14px/30px var(--seg); }
.dtitle button { height: 22px; background: #c1574b; border: 1px solid #6b3a3a; border-top: 0; margin: 0 -2px 0 2px; }
.dbody { background: var(--face); padding: 15px 12px 14px 13px; display: flex; flex-direction: column; align-items: center; font: 12px/16px var(--seg); }
.msg { display: flex; gap: 14px; align-self: stretch; }
.msg p { white-space: nowrap; }
.ok { width: 79px; height: 28px; margin-top: 19px; border: 1px solid #777; box-shadow: inset -2px -2px #888, inset 1px 1px #fff; padding: 3px 4px 4px 3px; }
.ok span { flex: 1; align-self: stretch; border: 1px dotted #333; line-height: 17px; }
```
